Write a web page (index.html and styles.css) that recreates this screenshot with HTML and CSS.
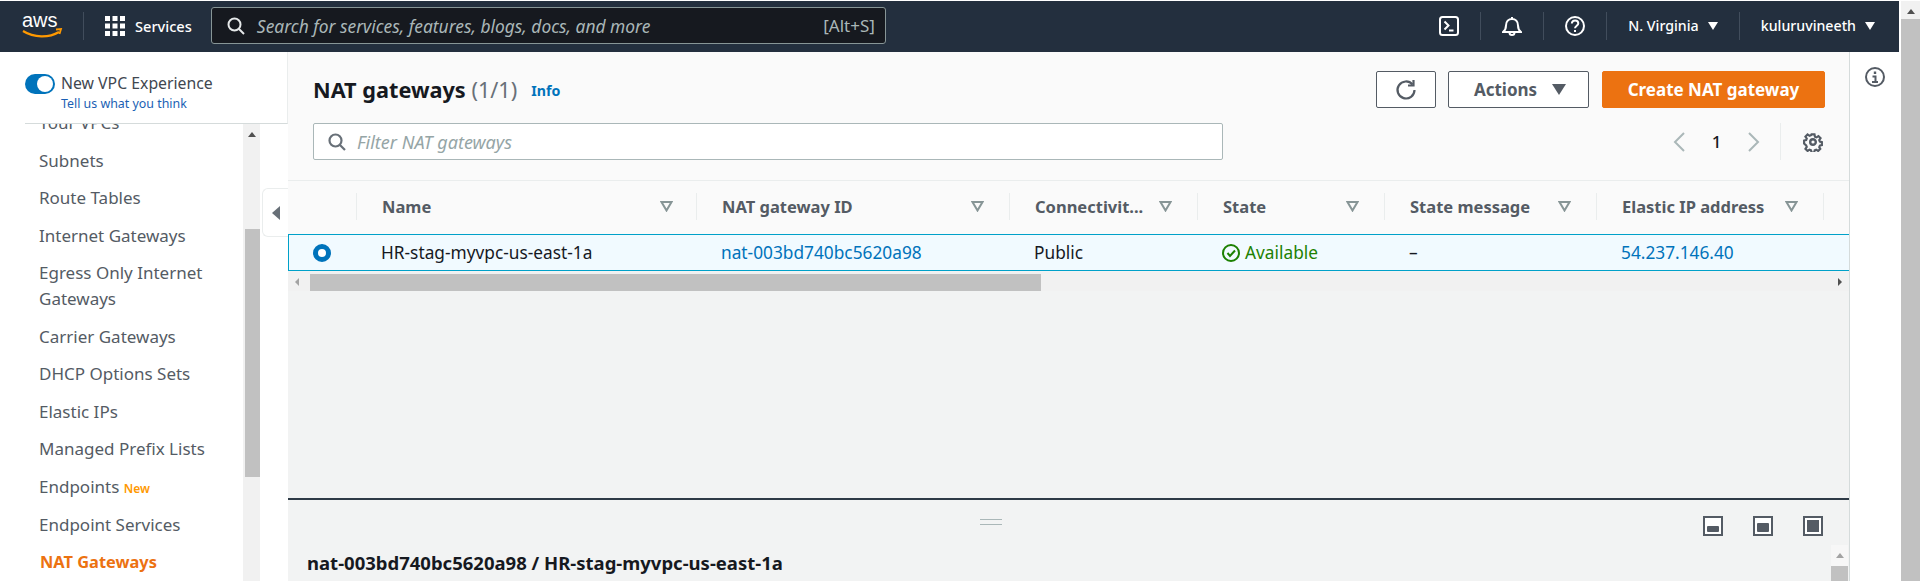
FILE: index.html
```html
<!DOCTYPE html>
<html lang="en">
<head>
    <meta charset="UTF-8">
    <title>NAT gateways | VPC Console</title>
    <link rel="stylesheet" href="styles.css">
</head>
<body>
    <div class="app">
        <div class="page">
            <header class="topbar">
                <svg class="aws-logo" width="42" height="26" viewBox="0 0 42 26">
                    <text x="0" y="14" class="aws-logo-text">aws</text>
                    <path d="M1 18c11 7 26 7 36 1" fill="none" stroke="#ff9900" stroke-width="2.2"/>
                    <path d="M34 16.500l5-.5-1.500 5" fill="none" stroke="#ff9900" stroke-width="1.800"/>
                </svg>
                <span class="topbar-sep sep-logo"></span>
                <svg class="grid-icon" width="20" height="20" viewBox="0 0 20 20" fill="#fff">
                    <rect width="5" height="5"/><rect x="7.500" width="5" height="5"/><rect x="15" width="5" height="5"/>
                    <rect y="7.500" width="5" height="5"/><rect x="7.500" y="7.500" width="5" height="5"/><rect x="15" y="7.500" width="5" height="5"/>
                    <rect y="15" width="5" height="5"/><rect x="7.500" y="15" width="5" height="5"/><rect x="15" y="15" width="5" height="5"/>
                </svg>
                <span class="services">Services</span>
                <div class="global-search">
                    <svg width="18" height="18" viewBox="0 0 18 18" fill="none" stroke="#e6e9ea" stroke-width="2">
                        <circle cx="7.500" cy="7.500" r="6"/><path d="M12 12l5 5"/>
                    </svg>
                    <span class="global-search-text">Search for services, features, blogs, docs, and more</span>
                    <span class="global-search-key">[Alt+S]</span>
                </div>
                <div class="topbar-right">
                    <svg class="top-icon" width="20" height="20" viewBox="0 0 20 20" fill="none" stroke="#fff" stroke-width="2">
                        <rect x="1" y="1" width="18" height="18" rx="2.500"/>
                        <path d="M5.500 5.500l4 4-4 4M10 14.500h4.500"/>
                    </svg>
                    <span class="topbar-sep"></span>
                    <svg class="top-icon" width="20" height="20" viewBox="0 0 20 20" fill="none" stroke="#fff" stroke-width="2">
                        <path d="M1 16c2-1.500 3-3 3-6.500C4 5.500 6.500 3 10 3s6 2.500 6 6.500c0 3.500 1 5 3 6.500zM10 1v2M7.500 16.500a2.500 2.500 0 0 0 5 0"/>
                    </svg>
                    <span class="topbar-sep"></span>
                    <svg class="top-icon" width="20" height="20" viewBox="0 0 20 20" fill="none" stroke="#fff" stroke-width="2">
                        <circle cx="10" cy="10" r="9"/>
                        <path d="M6.800 7.500c.2-2 1.500-3 3.300-3 1.900 0 3.200 1.200 3.200 2.800 0 2.400-3.300 2.400-3.300 5"/>
                        <path d="M10 14v2"/>
                    </svg>
                    <span class="topbar-sep"></span>
                    <span class="top-menu">N. Virginia</span>
                    <span class="top-caret"></span>
                    <span class="topbar-sep"></span>
                    <span class="top-menu">kuluruvineeth</span>
                    <span class="top-caret"></span>
                </div>
            </header>
            <div class="body-row">
                <aside class="sidebar">
                    <div class="vpc-toggle">
                        <span class="toggle"><span class="toggle-knob"></span></span>
                        <div>
                            <div class="toggle-title">New VPC Experience</div>
                            <a class="toggle-link">Tell us what you think</a>
                        </div>
                    </div>
                    <div class="nav-wrap">
                        <ul class="nav-list">
                            <li>Your VPCs</li>
                            <li>Subnets</li>
                            <li>Route Tables</li>
                            <li>Internet Gateways</li>
                            <li>Egress Only Internet Gateways</li>
                            <li>Carrier Gateways</li>
                            <li>DHCP Options Sets</li>
                            <li>Elastic IPs</li>
                            <li>Managed Prefix Lists</li>
                            <li>Endpoints <span class="nav-new">New</span></li>
                            <li>Endpoint Services</li>
                            <li class="nav-active">NAT Gateways</li>
                        </ul>
                        <div class="scroll-y nav-scroll">
                            <span class="arrow-up"></span>
                            <div class="thumb nav-thumb"></div>
                        </div>
                    </div>
                    <div class="collapse-handle"><span class="arrow-left"></span></div>
                </aside>
                <main class="content">
                    <section class="upper">
                        <div class="title-row">
                            <h1>NAT gateways <span class="count">(1/1)</span></h1>
                            <a class="info-link">Info</a>
                            <div class="buttons">
                                <button class="btn btn-refresh">
                                    <svg width="22" height="22" viewBox="0 0 22 22" fill="none" stroke="#545b64" stroke-width="2.200">
                                        <path d="M17.500 5.500A8.500 8.500 0 1 0 19.500 11"/>
                                        <path d="M18.500 1v5.500H13"/>
                                    </svg>
                                </button>
                                <button class="btn btn-actions">Actions <span class="btn-caret"></span></button>
                                <button class="btn btn-primary">Create NAT gateway</button>
                            </div>
                        </div>
                        <div class="filter-row">
                            <div class="filter">
                                <svg width="18" height="18" viewBox="0 0 18 18" fill="none" stroke="#687078" stroke-width="2.200">
                                    <circle cx="7.500" cy="7.500" r="6"/><path d="M12 12l5 5"/>
                                </svg>
                                <span class="filter-text">Filter NAT gateways</span>
                            </div>
                            <div class="pager">
                                <svg width="12" height="20" viewBox="0 0 12 20" fill="none" stroke="#aab7b8" stroke-width="2"><path d="M11 1L2 10l9 9"/></svg>
                                <span class="pager-num">1</span>
                                <svg width="12" height="20" viewBox="0 0 12 20" fill="none" stroke="#aab7b8" stroke-width="2"><path d="M1 1l9 9-9 9"/></svg>
                            </div>
                            <div class="pager-settings">
                                <svg width="20" height="20" viewBox="0 0 20 20" fill="none" stroke="#545b64" stroke-width="2.400">
                                    <circle cx="10" cy="10" r="2.800"/>
                                    <path d="M8.300 1.500h3.400l.5 2.600 1.700.7 2.200-1.500 2.400 2.400-1.500 2.200.7 1.700 2.300.5v3.400l-2.300.5-.7 1.700 1.200 2-2.400 2.400-2.200-1.500-1.700.7-.5 2.600H8.300l-.5-2.600-1.700-.7-2.200 1.500-2.400-2.400 1.500-2.200-.7-1.700L0 11.700V8.300l2.300-.5.7-1.700L1.500 3.900l2.400-2.400 2.200 1.500 1.700-.7z" transform="translate(1.100 1.100) scale(.89)"/>
                                </svg>
                            </div>
                        </div>
                        <div class="table">
                            <div class="table-row table-head">
                                <div class="th th-radio"></div>
                                <div class="th th-name"><span class="th-text">Name</span><svg class="sort" width="13" height="11" viewBox="0 0 13 11"><path d="M1.500 1h10l-5 8.500z"/></svg></div>
                                <div class="th"><span class="th-text">NAT gateway ID</span><svg class="sort" width="13" height="11" viewBox="0 0 13 11"><path d="M1.500 1h10l-5 8.500z"/></svg></div>
                                <div class="th"><span class="th-text">Connectivit...</span><svg class="sort" width="13" height="11" viewBox="0 0 13 11"><path d="M1.500 1h10l-5 8.500z"/></svg></div>
                                <div class="th"><span class="th-text">State</span><svg class="sort" width="13" height="11" viewBox="0 0 13 11"><path d="M1.500 1h10l-5 8.500z"/></svg></div>
                                <div class="th"><span class="th-text">State message</span><svg class="sort" width="13" height="11" viewBox="0 0 13 11"><path d="M1.500 1h10l-5 8.500z"/></svg></div>
                                <div class="th"><span class="th-text">Elastic IP address</span><svg class="sort" width="13" height="11" viewBox="0 0 13 11"><path d="M1.500 1h10l-5 8.500z"/></svg></div>
                                <div class="th"><span class="th-text">Private IP address</span></div>
                            </div>
                            <div class="table-row table-selected">
                                <div class="td td-radio"><span class="radio"></span></div>
                                <div class="td">HR-stag-myvpc-us-east-1a</div>
                                <div class="td td-link">nat-003bd740bc5620a98</div>
                                <div class="td">Public</div>
                                <div class="td td-state">
                                    <svg width="18" height="20" viewBox="0 0 18 20" fill="none" stroke="#1d8102" stroke-width="2">
                                        <circle cx="9" cy="10" r="8"/><path d="M5.500 10l2.500 3 5-5.500"/>
                                    </svg>
                                    <span>Available</span>
                                </div>
                                <div class="td">–</div>
                                <div class="td td-link">54.237.146.40</div>
                                <div class="td">10.0.0.25</div>
                            </div>
                        </div>
                        <div class="scroll-x">
                            <span class="arrow-left-small"></span>
                            <div class="thumb x-thumb"></div>
                            <span class="arrow-right-small"></span>
                        </div>
                    </section>
                    <section class="split">
                        <div class="split-bar">
                            <span class="drag-handle"></span>
                            <div class="split-icons">
                                <svg width="20" height="20" viewBox="0 0 20 20"><rect x="1" y="1" width="18" height="18" fill="#fff" stroke="#545b64" stroke-width="2"/><rect x="4" y="10" width="12" height="6" rx="1" fill="#545b64"/></svg>
                                <svg width="20" height="20" viewBox="0 0 20 20"><rect x="1" y="1" width="18" height="18" fill="#fff" stroke="#545b64" stroke-width="2"/><rect x="4" y="7" width="12" height="9" rx="1" fill="#545b64"/></svg>
                                <svg width="20" height="20" viewBox="0 0 20 20"><rect x="1" y="1" width="18" height="18" fill="#fff" stroke="#545b64" stroke-width="2"/><rect x="4" y="4" width="12" height="12" fill="#545b64"/></svg>
                            </div>
                        </div>
                        <div class="split-body">
                            <h2>nat-003bd740bc5620a98 / HR-stag-myvpc-us-east-1a</h2>
                            <div class="scroll-y split-scroll">
                                <span class="arrow-up arrow-up-grey"></span>
                                <div class="thumb"></div>
                            </div>
                        </div>
                    </section>
                </main>
                <aside class="info-panel">
                    <svg width="20" height="20" viewBox="0 0 20 20" fill="none" stroke="#545b64" stroke-width="2">
                        <circle cx="10" cy="10" r="9"/>
                        <path d="M10 4.500v2.500" stroke-width="2.400"/>
                        <path d="M7.500 9.500h3V15M7 15h6"/>
                    </svg>
                </aside>
            </div>
        </div>
        <div class="scroll-y page-scroll">
            <span class="arrow-up"></span>
            <div class="thumb"></div>
        </div>
    </div>
</body>
</html>
```

FILE: styles.css
```css
html, body {
    margin: 0;
    padding: 0;
    height: 581px;
    overflow: hidden;
    background-color: #fff;
    font-family: "Noto Sans", "Open Sans", sans-serif;
    color: #16191f;
}
.app {
    display: flex;
    height: 581px;
}
.page {
    flex: 1;
    min-width: 0;
    display: flex;
    flex-direction: column;
}

/* top bar */
.topbar {
    flex: 0 0 51px;
    box-sizing: border-box;
    margin-top: 1px;
    display: flex;
    align-items: center;
    padding: 0 0 2px 22px;
    background-color: #232f3e;
    color: #fff;
}
.aws-logo {
    flex: none;
}
.aws-logo-text {
    font-family: "Liberation Sans", sans-serif;
    font-size: 20px;
    fill: #fff;
}
.topbar-sep {
    width: 1px;
    height: 28px;
    background-color: #414d5c;
    margin: 0 21px;
}
.sep-logo {
    margin-left: 19px;
}
.grid-icon {
    flex: none;
}
.services {
    margin-left: 10px;
    font-size: 14.600px;
    font-weight: 500;
}
.global-search {
    margin-left: 19px;
    width: 675px;
    height: 37px;
    box-sizing: border-box;
    display: flex;
    align-items: center;
    padding: 0 10px 0 15px;
    background-color: #16191f;
    border: 1px solid #879596;
    border-radius: 3px;
}
.global-search-text {
    margin-left: 12px;
    flex: 1;
    font-size: 17.400px;
    font-style: italic;
    color: #aab7b8;
}
.global-search-key {
    font-size: 17px;
    color: #aab7b8;
}
.topbar-right {
    margin-left: auto;
    display: flex;
    align-items: center;
    padding-right: 24px;
}
.top-menu {
    font-size: 14.200px;
    font-weight: 500;
}
.top-caret {
    margin-left: 9px;
    width: 0;
    height: 0;
    border-left: 5px solid transparent;
    border-right: 5px solid transparent;
    border-top: 8px solid #fff;
}

.body-row {
    flex: 1;
    display: flex;
    min-height: 0;
}

/* left nav */
.sidebar {
    position: relative;
    flex: 0 0 288px;
    display: flex;
    flex-direction: column;
    min-height: 0;
}
.vpc-toggle {
    flex: 0 0 72px;
    box-sizing: border-box;
    margin-left: 25px;
    display: flex;
    gap: 6px;
    padding-top: 21px;
    background-color: #fff;
    border-bottom: 1px solid #d5dbdb;
    border-right: 1px solid #eaeded;
}
.toggle {
    flex: none;
    margin-top: 1px;
    width: 30px;
    height: 20px;
    border-radius: 10px;
    background-color: #0073bb;
    display: flex;
    align-items: center;
    justify-content: flex-end;
    padding-right: 2px;
    box-sizing: border-box;
}
.toggle-knob {
    width: 16px;
    height: 16px;
    border-radius: 50%;
    background-color: #fff;
}
.toggle-title {
    font-size: 15.800px;
    line-height: 20px;
    color: #414750;
}
.toggle-link {
    display: block;
    margin-top: 3px;
    font-size: 12.400px;
    line-height: 16px;
    color: #1a5fb4;
}
.nav-wrap {
    flex: 1;
    display: flex;
    min-height: 0;
    padding-right: 28px;
}
.nav-list {
    flex: 1;
    list-style-type: none;
    margin: 0;
    padding: 0 0 0 39px;
    font-size: 17px;
    line-height: 25.600px;
    color: #545b64;
    overflow: hidden;
}
.nav-list li {
    margin-bottom: 12px;
    padding-right: 10px;
}
.nav-list li:first-child {
    margin-top: -14px;
}
.nav-new {
    font-size: 12px;
    line-height: 12px;
    font-weight: 600;
    color: #ff9900;
}
.nav-list .nav-active {
    margin: 1px 0 0 1px;
    font-size: 16.400px;
    font-weight: 700;
    color: #ec7211;
}
.scroll-y {
    display: flex;
    flex-direction: column;
    align-items: center;
    background-color: #f1f1f1;
}
.nav-scroll {
    flex: 0 0 17px;
}
.nav-thumb {
    margin-top: 92px;
    flex: 0 0 248px !important;
}
.thumb {
    background-color: #c1c1c1;
}
.arrow-up {
    margin-top: 8px;
    width: 0;
    height: 0;
    border-left: 4px solid transparent;
    border-right: 4px solid transparent;
    border-bottom: 5px solid #505050;
}
.arrow-up-grey {
    border-bottom-color: #a3a3a3;
}
.nav-scroll .thumb {
    align-self: stretch;
    margin-left: 2px;
}
.collapse-handle {
    position: absolute;
    left: 262px;
    top: 136px;
    width: 26px;
    height: 49px;
    box-sizing: border-box;
    display: flex;
    align-items: center;
    padding-left: 9px;
    background-color: #fff;
    border: 1px solid #eaeded;
    border-right: none;
    border-radius: 6px 0 0 6px;
}
.arrow-left {
    width: 0;
    height: 0;
    border-top: 7px solid transparent;
    border-bottom: 7px solid transparent;
    border-right: 8px solid #687078;
}

/* main content */
.content {
    flex: 1;
    min-width: 0;
    display: flex;
    flex-direction: column;
    background-color: #f2f3f3;
}
.upper {
    flex: 0 0 448px;
    box-sizing: border-box;
    border-bottom: 2px solid #2e3a46;
}
.title-row {
    display: flex;
    align-items: center;
    height: 71px;
    box-sizing: border-box;
    padding: 0 24px 0 25px;
    background-color: #fafafa;
}
h1 {
    margin: 0;
    font-size: 21.700px;
    font-weight: 700;
    line-height: 37px;
    margin-top: 4px;
}
.count {
    font-weight: 400;
    color: #687078;
}
.info-link {
    margin-left: 14px;
    margin-top: 6px;
    font-size: 14.200px;
    font-weight: 700;
    color: #0073bb;
}
.buttons {
    margin-left: auto;
    margin-top: 4px;
    display: flex;
    gap: 12px;
}
.btn {
    height: 37px;
    box-sizing: border-box;
    font-family: inherit;
    font-size: 14px;
    font-weight: 700;
    border-radius: 2px;
    border: 1px solid #545b64;
    background-color: #fff;
    color: #545b64;
    display: flex;
    align-items: center;
    justify-content: center;
}
.btn-refresh {
    width: 60px;
}
.btn-actions {
    width: 141px;
    gap: 15px;
    padding: 0 0 0 3px;
    font-size: 17px;
}
.btn-caret {
    width: 0;
    height: 0;
    border-left: 7px solid transparent;
    border-right: 7px solid transparent;
    border-top: 11px solid #545b64;
}
.btn-primary {
    width: 223px;
    margin-left: 1px;
    background-color: #ec7211;
    border-color: #ec7211;
    color: #fff;
    font-size: 17px;
}
.filter-row {
    display: flex;
    align-items: center;
    box-sizing: border-box;
    padding: 0 26px 20px 25px;
    background-color: #fafafa;
    height: 57px;
}
.filter {
    width: 910px;
    height: 37px;
    box-sizing: border-box;
    display: flex;
    align-items: center;
    gap: 11px;
    padding-left: 14px;
    background-color: #fff;
    border: 1px solid #aab7b8;
    border-radius: 2px;
}
.filter-text {
    font-size: 18px;
    font-style: italic;
    color: #95a5a6;
}
.pager {
    margin-left: auto;
    display: flex;
    align-items: center;
}
.pager-num {
    width: 63px;
    text-align: center;
    font-size: 17px;
    font-weight: 500;
}
.pager-settings {
    margin-left: 20px;
    padding-left: 22px;
    height: 37px;
    display: flex;
    align-items: center;
    border-left: 1px solid #eaeded;
}

/* table */
.table {
    overflow: hidden;
}
.table-row {
    display: grid;
    grid-template-columns: 68px 340px 313px 188px 187px 212px 227px 220px;
    width: 1755px;
}
.table-head {
    height: 54px;
    box-sizing: border-box;
    border-top: 1px solid #eaeded;
    background-color: #fafafa;
}
.th {
    margin: 12px 0 14px;
    display: flex;
    align-items: center;
    justify-content: space-between;
    padding: 0 25px;
    border-left: 1px solid #eaeded;
    font-size: 16.500px;
    font-weight: 700;
    color: #545b64;
    white-space: nowrap;
}
.th-name {
    padding-right: 23px;
}
.th-radio {
    border-left: none;
}
.sort {
    flex: none;
    fill: none;
    stroke: #879596;
    stroke-width: 2;
}
.table-selected {
    height: 37px;
    box-sizing: border-box;
    box-shadow: inset 0 0 0 1px #00a1c9;
    background-color: #f1faff;
}
.td {
    padding-left: 25px;
    font-size: 17.300px;
    line-height: 35px;
    white-space: nowrap;
    display: flex;
    align-items: center;
    color: #16191f;
}
.radio {
    width: 8px;
    height: 8px;
    border: 5px solid #0073bb;
    border-radius: 50%;
    background-color: #fff;
}
.td-link {
    color: #0073bb;
}
.td-state {
    gap: 5px;
    color: #1d8102;
}
.scroll-x {
    margin-top: 1px;
    display: flex;
    align-items: center;
    height: 19px;
    background-color: #f1f1f1;
}
.arrow-left-small, .arrow-right-small {
    flex: none;
    width: 0;
    height: 0;
    border-top: 4px solid transparent;
    border-bottom: 4px solid transparent;
}
.arrow-left-small {
    margin-left: 7px;
    border-right: 4px solid #a3a3a3;
}
.arrow-right-small {
    margin-left: auto;
    margin-right: 7px;
    border-left: 4px solid #505050;
}
.x-thumb {
    margin-left: 11px;
    width: 731px;
    height: 17px;
    align-self: flex-end;
}

/* split panel */
.split {
    flex: 1;
    min-height: 0;
    display: flex;
    flex-direction: column;
}
.split-bar {
    flex: 0 0 45px;
    display: flex;
    align-items: flex-start;
    padding-top: 16px;
    box-sizing: border-box;
}
.drag-handle {
    width: 22px;
    height: 4px;
    margin-left: 692px;
    margin-top: 3px;
    border-top: 1px solid #aab7b8;
    border-bottom: 1px solid #aab7b8;
}
.split-icons {
    margin-left: auto;
    margin-right: 26px;
    display: flex;
    gap: 30px;
}
.split-body {
    flex: 1;
    display: flex;
    min-height: 0;
}
h2 {
    flex: 1;
    margin: 7px 0 0 19px;
    font-size: 18.500px;
    line-height: 22px;
    font-weight: 700;
}
.split-scroll {
    flex: 0 0 17px;
    margin-right: 1px;
    background-color: #f7f7f7;
}
.split-scroll .thumb {
    margin-top: 8px;
    align-self: stretch;
    flex: 1;
}
.info-panel {
    flex: 0 0 50px;
    box-sizing: border-box;
    border-left: 1px solid #d5dbdb;
    padding: 15px 0 0 15px;
    background-color: #fff;
}
.page-scroll {
    flex: 0 0 19px;
    margin-left: 2px;
    margin-top: 1px;
}
.page-scroll .thumb {
    margin-top: 5px;
    flex: 1;
    align-self: stretch;
}
```
